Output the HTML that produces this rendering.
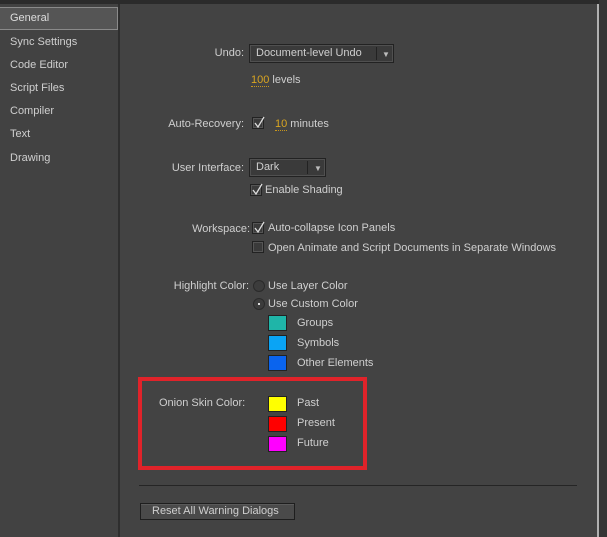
<!DOCTYPE html>
<html><head><style>
*{margin:0;padding:0;box-sizing:border-box}
body{width:607px;height:537px;background:#434343;font-family:"Liberation Sans",sans-serif;font-size:11px;color:#cfcfcf;position:relative;overflow:hidden}
.a{position:absolute;white-space:nowrap;line-height:13px}
.r{text-align:right}
.cb{position:absolute;width:12px;height:12px;border:1px solid #222;background:#3a3a3a;box-shadow:inset 0 0 0 1px #555}
.cb svg{position:absolute;left:0;top:-2px}
.rad{position:absolute;width:12px;height:12px;border-radius:50%;border:1px solid #2a2a2a;background:#3c3c3c}
.sw{position:absolute;width:19px;height:16px;border:1px solid #222}
.dd{position:absolute;height:19px;background:#3a3a3a;border:1px solid #222;box-shadow:inset 0 0 0 1px #505050}
.u{color:#d9a521;border-bottom:1px dotted #c8961c}
</style></head><body>
<div style="position:absolute;left:0;top:0;width:607px;height:4px;background:#2b2b2b"></div>
<div style="position:absolute;left:0;top:4px;width:118px;height:533px;background:#424242"></div>
<div style="position:absolute;left:118px;top:4px;width:2px;height:533px;background:#2e2e2e"></div>
<div style="position:absolute;left:0;top:7px;width:118px;height:23px;background:#555;border:1px solid #8a8a8a;border-left:none"></div>
<div class="a" style="left:10px;top:12px;color:#ddd">General</div>
<div class="a" style="left:10px;top:36px">Sync Settings</div>
<div class="a" style="left:10px;top:59px">Code Editor</div>
<div class="a" style="left:10px;top:82px">Script Files</div>
<div class="a" style="left:10px;top:105px">Compiler</div>
<div class="a" style="left:10px;top:128px">Text</div>
<div class="a" style="left:10px;top:152px">Drawing</div>
<div style="position:absolute;left:597px;top:4px;width:2px;height:533px;background:#b0b0b0"></div>
<div style="position:absolute;left:599px;top:0;width:8px;height:537px;background:#353535"></div>

<div class="a r" style="right:363px;top:47px">Undo:</div>
<div class="dd" style="left:249px;top:44px;width:145px"></div>
<div class="a" style="left:256px;top:47px">Document-level Undo</div>
<div style="position:absolute;left:376px;top:47px;width:1px;height:13px;background:#222"></div>
<div class="a" style="left:382px;top:48px;font-size:8px;color:#bbb">▼</div>
<div class="a" style="left:251px;top:74px"><span class="u">100</span> levels</div>

<div class="a r" style="right:363px;top:118px">Auto-Recovery:</div>
<div class="cb" style="left:252px;top:117px"><svg width="14" height="14"><path d="M2 7 L5 11 L11 1" stroke="#ddd" stroke-width="1.3" fill="none"/></svg></div>
<div class="a" style="left:275px;top:118px"><span class="u">10</span> minutes</div>

<div class="a r" style="right:363px;top:162px">User Interface:</div>
<div class="dd" style="left:249px;top:158px;width:77px"></div>
<div class="a" style="left:256px;top:161px">Dark</div>
<div style="position:absolute;left:307px;top:161px;width:1px;height:13px;background:#222"></div>
<div class="a" style="left:314px;top:162px;font-size:8px;color:#bbb">▼</div>
<div class="cb" style="left:250px;top:184px"><svg width="14" height="14"><path d="M2 7 L5 11 L11 1" stroke="#ddd" stroke-width="1.3" fill="none"/></svg></div>
<div class="a" style="left:265px;top:184px">Enable Shading</div>

<div class="a r" style="right:357px;top:223px">Workspace:</div>
<div class="cb" style="left:252px;top:222px"><svg width="14" height="14"><path d="M2 7 L5 11 L11 1" stroke="#ddd" stroke-width="1.3" fill="none"/></svg></div>
<div class="a" style="left:268px;top:222px">Auto-collapse Icon Panels</div>
<div class="cb" style="left:252px;top:241px"></div>
<div class="a" style="left:268px;top:242px">Open Animate and Script Documents in Separate Windows</div>

<div class="a r" style="right:358px;top:280px">Highlight Color:</div>
<div class="rad" style="left:253px;top:280px"></div>
<div class="a" style="left:268px;top:280px">Use Layer Color</div>
<div class="rad" style="left:253px;top:298px"><div style="position:absolute;left:4px;top:4px;width:2px;height:2px;background:#ddd"></div></div>
<div class="a" style="left:268px;top:298px">Use Custom Color</div>
<div class="sw" style="left:268px;top:315px;background:#1fb5a8"></div>
<div class="a" style="left:297px;top:317px">Groups</div>
<div class="sw" style="left:268px;top:335px;background:#0aa4f5"></div>
<div class="a" style="left:297px;top:337px">Symbols</div>
<div class="sw" style="left:268px;top:355px;background:#0a64ee"></div>
<div class="a" style="left:297px;top:357px">Other Elements</div>

<div style="position:absolute;left:138px;top:377px;width:229px;height:93px;border:4px solid #e0232a"></div>
<div class="a" style="left:159px;top:397px">Onion Skin Color:</div>
<div class="sw" style="left:268px;top:396px;background:#ffff00"></div>
<div class="a" style="left:297px;top:397px">Past</div>
<div class="sw" style="left:268px;top:416px;background:#ff0000"></div>
<div class="a" style="left:297px;top:417px">Present</div>
<div class="sw" style="left:268px;top:436px;background:#ff00ff"></div>
<div class="a" style="left:297px;top:437px">Future</div>

<div style="position:absolute;left:139px;top:485px;width:438px;height:1px;background:#252525"></div>
<div style="position:absolute;left:140px;top:503px;width:155px;height:17px;background:#4a4a4a;border:1px solid #1e1e1e;box-shadow:inset 0 1px 0 #5a5a5a"></div>
<div class="a" style="left:152px;top:505px">Reset All Warning Dialogs</div>
</body></html>
